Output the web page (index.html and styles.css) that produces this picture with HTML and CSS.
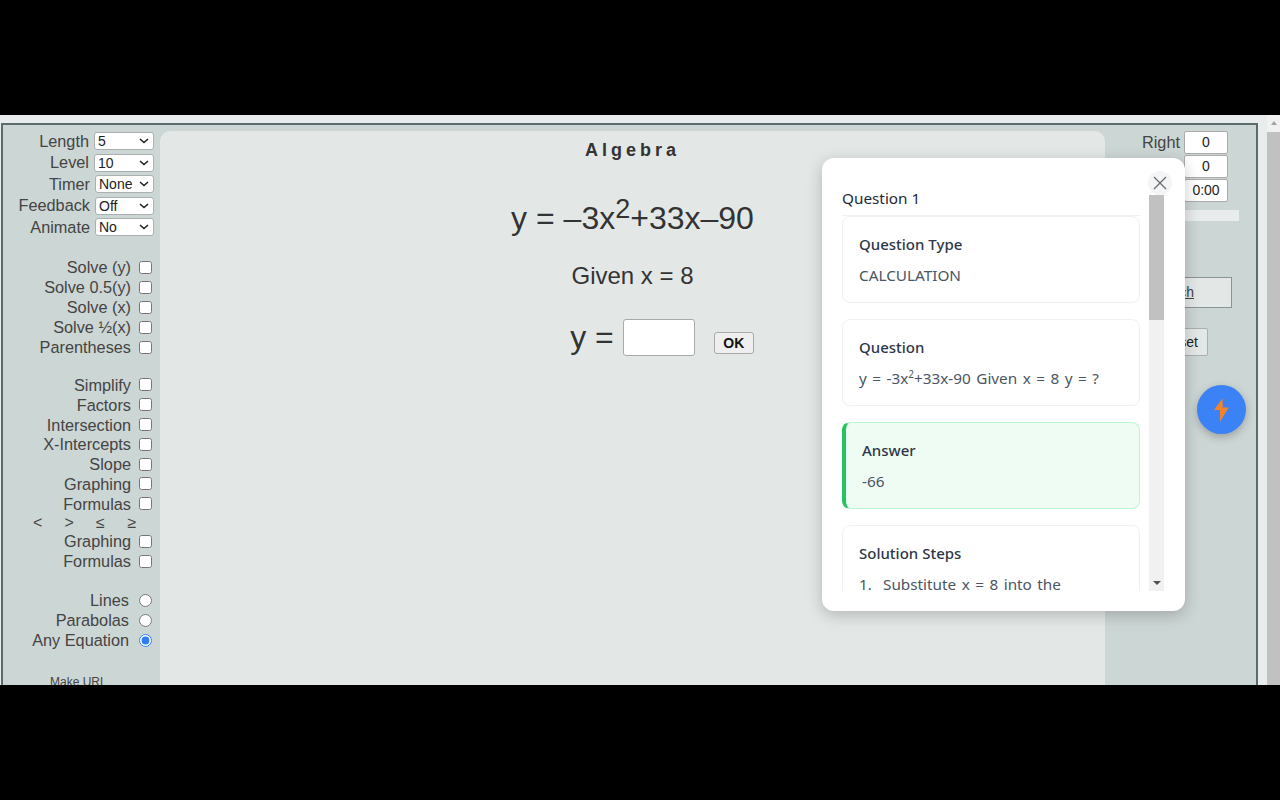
FILE: index.html
```html
<!DOCTYPE html>
<html lang="en">
<head>
    <meta charset="UTF-8">
    <title>Algebra</title>
    <link rel="stylesheet" href="styles.css">
</head>
<body>
    <div class="letterbox"></div>
    <div class="stage">
        <div class="app">
            <div class="sidebar">
                <div class="select-rows">
                    <label class="select-row">Length <select><option>5</option></select></label>
                    <label class="select-row">Level <select><option>10</option></select></label>
                    <label class="select-row">Timer <select class="narrow"><option>None</option></select></label>
                    <label class="select-row">Feedback <select class="narrow"><option>Off</option></select></label>
                    <label class="select-row">Animate <select class="narrow"><option>No</option></select></label>
                </div>
                <div class="check-group first">
                    <label class="check-row">Solve (y) <input type="checkbox"></label>
                    <label class="check-row">Solve 0.5(y) <input type="checkbox"></label>
                    <label class="check-row">Solve (x) <input type="checkbox"></label>
                    <label class="check-row">Solve ½(x) <input type="checkbox"></label>
                    <label class="check-row">Parentheses <input type="checkbox"></label>
                </div>
                <div class="check-group second">
                    <label class="check-row">Simplify <input type="checkbox"></label>
                    <label class="check-row">Factors <input type="checkbox"></label>
                    <label class="check-row">Intersection <input type="checkbox"></label>
                    <label class="check-row">X-Intercepts <input type="checkbox"></label>
                    <label class="check-row">Slope <input type="checkbox"></label>
                    <label class="check-row">Graphing <input type="checkbox"></label>
                    <label class="check-row">Formulas <input type="checkbox"></label>
                    <div class="symbols"><span>&lt;</span><span>&gt;</span><span>≤</span><span>≥</span></div>
                    <label class="check-row">Graphing <input type="checkbox"></label>
                    <label class="check-row">Formulas <input type="checkbox"></label>
                </div>
                <div class="check-group third">
                    <label class="check-row radio-row">Lines <input type="radio" name="kind"></label>
                    <label class="check-row radio-row">Parabolas <input type="radio" name="kind"></label>
                    <label class="check-row radio-row">Any Equation <input type="radio" name="kind" checked></label>
                </div>
                <div class="make-url">Make URL</div>
            </div>

            <div class="main">
                <h1>Algebra</h1>
                <div class="equation">y = –3x<sup>2</sup>+33x–90</div>
                <div class="given">Given x = 8</div>
                <div class="answer-row">
                    <span class="answer-label">y =</span>
                    <input type="text" class="answer-input">
                    <button class="ok-btn">OK</button>
                </div>
            </div>

            <div class="score">
                <div class="score-row"><span>Right</span><div class="score-box">0</div></div>
                <div class="score-row"><span>Wrong</span><div class="score-box">0</div></div>
                <div class="score-row"><span>Time</span><div class="score-box">0:00</div></div>
                <div class="progress"></div>
                <a class="search-btn" href="#">Search</a>
                <button class="reset-btn">Reset</button>
            </div>
        </div>

        <div class="page-scrollbar">
            <div class="page-arrow"></div>
            <div class="page-thumb"></div>
        </div>

        <button class="fab" aria-label="Quick answer">
            <svg width="15" height="24" viewBox="0 0 15 24"><path d="M8.5 0.3 0 12H6V23.7L14.8 9.5H8.7z" fill="#f5822a"/></svg>
        </button>

        <div class="modal">
            <div class="modal-body">
                <h2>Question 1</h2>
                <div class="card">
                    <h3>Question Type</h3>
                    <p>CALCULATION</p>
                </div>
                <div class="card">
                    <h3>Question</h3>
                    <p>y = -3x<sup>2</sup>+33x-90 Given x = 8 y = ?</p>
                </div>
                <div class="card card-answer">
                    <h3>Answer</h3>
                    <p>-66</p>
                </div>
                <div class="card">
                    <h3>Solution Steps</h3>
                    <ol>
                        <li><span class="step-num">1.</span><span>Substitute x = 8 into the equation</span></li>
                    </ol>
                </div>
            </div>
            <div class="modal-scrollbar">
                <div class="modal-thumb"></div>
                <div class="modal-arrow"></div>
            </div>
            <button class="close-btn" aria-label="Close">
                <svg width="14" height="14" viewBox="0 0 14 14"><path d="M1 1 13 13M13 1 1 13" stroke="#6b6b6b" stroke-width="1.3" fill="none"/></svg>
            </button>
        </div>
    </div>
    <div class="letterbox"></div>
</body>
</html>
```

FILE: styles.css
```css
/* Page frame */
body {
    margin: 0;
    font-family: "Liberation Sans", Arial, sans-serif;
    color: #444;
    background: #000;
}

.letterbox {
    height: 115px;
    background: #000;
}

.stage {
    position: relative;
    height: 570px;
    overflow: hidden;
    background: #e8ecec;
    padding: 8px 0 0 1px;
    box-sizing: border-box;
}

.app {
    display: flex;
    width: 1257px;
    height: 640px;
    box-sizing: border-box;
    border: 2px solid #5c6b6b;
    background: #ccd6d4;
}

/* Left column */
.sidebar {
    width: 157px;
    flex-shrink: 0;
    font-size: 16.3px;
}

.select-rows {
    padding-top: 5.5px;
}

.select-row {
    display: flex;
    justify-content: flex-end;
    align-items: center;
    gap: 5px;
    height: 21.5px;
    padding-right: 6px;
}

.select-row select {
    appearance: none;
    width: 60px;
    height: 18px;
    padding: 0 0 0 3px;
    font: 14px "Liberation Sans", Arial, sans-serif;
    color: #222;
    background: #fff url("data:image/svg+xml,%3Csvg xmlns='http://www.w3.org/2000/svg' width='10' height='6'%3E%3Cpath d='M1 1l4 3.5L9 1' fill='none' stroke='%23222' stroke-width='1.6'/%3E%3C/svg%3E") no-repeat right 4px center;
    border: 1px solid #aab0b0;
    border-radius: 3px;
}

.select-row select.narrow {
    width: 59px;
}

.check-group.first {
    margin-top: 19px;
}

.check-group.second {
    margin-top: 18px;
}

.check-group.second .check-row {
    height: 19.8px;
}

.check-group.third {
    margin-top: 19px;
}

.check-row {
    display: flex;
    justify-content: flex-end;
    align-items: center;
    height: 20px;
    padding-right: 8px;
    line-height: 20px;
}

.check-row input {
    width: 13px;
    height: 13px;
    margin: 0 0 0 8px;
    accent-color: #2f7df6;
}

.radio-row input {
    margin-left: 10px;
}

.symbols {
    display: flex;
    gap: 22.5px;
    height: 18px;
    line-height: 18px;
    font-size: 16px;
    padding-left: 30px;
}

.symbols span {
    width: 9px;
}

.make-url {
    margin-top: 24px;
    padding-left: 47px;
    font-size: 12px;
    line-height: 16px;
}

/* Center panel */
.main {
    width: 945px;
    flex-shrink: 0;
    text-align: center;
    background: #e3e8e7;
    border-radius: 10px 10px 0 0;
    color: #333;
    margin-top: 6px;
}

h1 {
    margin: 9px 0 0;
    font-size: 18px;
    line-height: 21px;
    letter-spacing: 4px;
    font-weight: bold;
}

.equation {
    margin-top: 36px;
    font-size: 32px;
    line-height: 42px;
}

.equation sup {
    font-size: 27px;
    line-height: 0;
    vertical-align: 11px;
}

.given {
    margin-top: 22px;
    font-size: 24px;
    line-height: 30px;
}

.answer-row {
    display: flex;
    justify-content: center;
    align-items: center;
    margin-top: 28px;
    padding-left: 59px;
    color: #333;
}

.answer-label {
    font-size: 32px;
    margin-right: 9px;
}

.answer-input {
    width: 72px;
    height: 37px;
    box-sizing: border-box;
    border: 1px solid #aaa;
    border-radius: 3px;
    background: #fff;
    margin-right: 19px;
}

.ok-btn {
    width: 40px;
    height: 22px;
    margin-top: 10px;
    padding: 0;
    font: bold 14px "Liberation Sans", Arial, sans-serif;
    color: #111;
    background: #efefef;
    border: 1px solid #aaa;
    border-radius: 3px;
}

/* Right column */
.score {
    flex: 1;
    font-size: 16.3px;
    padding-top: 5px;
}

.score-row {
    display: flex;
    justify-content: flex-end;
    align-items: center;
    gap: 4px;
    height: 24px;
    padding-right: 28px;
}

.score-box {
    width: 44px;
    height: 23px;
    box-sizing: border-box;
    line-height: 21px;
    text-align: center;
    font-size: 14px;
    color: #222;
    background: #fff;
    border: 1px solid #aaa;
    border-radius: 2px;
}

.progress {
    width: 54px;
    height: 11px;
    margin: 8px 0 0 80px;
    background: #e8ecec;
}

.search-btn {
    display: block;
    width: 111px;
    height: 31px;
    box-sizing: border-box;
    margin: 56px 0 0 16px;
    padding-right: 37px;
    line-height: 29px;
    font-size: 14px;
    text-align: right;
    color: #444;
    background: #e3e8e7;
    border: 1px solid #8a9494;
}

.reset-btn {
    display: block;
    width: 61px;
    height: 28px;
    margin: 20px 0 0 42px;
    padding: 0 9px 0 0;
    font: 14px "Liberation Sans", Arial, sans-serif;
    text-align: right;
    color: #222;
    background: #e3e8e7;
    border: 1px solid #aab0b0;
    border-radius: 2px;
}

.page-scrollbar {
    position: absolute;
    top: 0;
    right: 0;
    width: 13px;
    height: 100%;
    background: #f1f1f1;
}

.page-arrow {
    width: 0;
    margin: 6px auto 0;
    border: 3.5px solid transparent;
    border-top: 0;
    border-bottom: 4px solid #a3a3a3;
}

.page-thumb {
    height: 100%;
    margin-top: 7px;
    background: #c1c1c1;
}

.fab {
    position: absolute;
    left: 1197px;
    top: 270px;
    width: 49px;
    height: 49px;
    padding: 0;
    display: flex;
    align-items: center;
    justify-content: center;
    border: none;
    border-radius: 50%;
    background: #3b82f6;
    box-shadow: 0 3px 8px rgba(0, 0, 0, 0.25);
}

/* Popup */
.modal {
    position: absolute;
    left: 822px;
    top: 43px;
    width: 363px;
    height: 453px;
    display: flex;
    box-sizing: border-box;
    padding: 20px 21px 20px 20px;
    color: #4b5563;
    font-family: "Noto Sans", sans-serif;
    background: #fff;
    border-radius: 12px;
    box-shadow: 0 4px 16px rgba(0, 0, 0, 0.22);
}

.modal-body {
    width: 298px;
    height: 413px;
    overflow: hidden;
    flex-shrink: 0;
}

h2 {
    margin: 8px 0 0;
    padding-bottom: 5px;
    font-size: 15.3px;
    line-height: 24px;
    font-weight: 400;
    color: #1f2937;
    border-bottom: 1px solid #f0f0f0;
}

.card {
    box-sizing: border-box;
    min-height: 87px;
    margin-bottom: 16px;
    padding: 16px 16px 15px;
    border: 1px solid #f0f1f3;
    border-radius: 8px;
    background: #fff;
}

.card h3 {
    margin: 0 0 8px;
    font-size: 15px;
    line-height: 22px;
    font-weight: 500;
    color: #2d3748;
}

.card p {
    margin: 0;
    font-size: 15.3px;
    line-height: 24px;
    word-spacing: 1.5px;
}

.card sup {
    font-size: 10px;
    line-height: 0;
}

.card ol {
    margin: 0;
    padding: 0;
    list-style: none;
    font-size: 15.3px;
    line-height: 24px;
    word-spacing: 1.5px;
}

.card li {
    display: flex;
}

.step-num {
    width: 24px;
    flex-shrink: 0;
}

.card-answer {
    background: #effcf4;
    border-color: #bbf7d0;
    border-left: 4px solid #22c55e;
}

.modal-scrollbar {
    width: 15px;
    height: 396px;
    margin: 17px 0 0 9px;
    background: #f1f1f1;
    display: flex;
    flex-direction: column;
    justify-content: space-between;
}

.modal-thumb {
    height: 125px;
    background: #c1c1c1;
}

.modal-arrow {
    width: 0;
    margin: 0 auto 6px;
    border: 4px solid transparent;
    border-bottom: 0;
    border-top: 4px solid #505050;
}

.close-btn {
    position: absolute;
    top: 13px;
    right: 13px;
    width: 24px;
    height: 24px;
    padding: 0;
    display: flex;
    align-items: center;
    justify-content: center;
    border: none;
    border-radius: 50%;
    background: #f3f4f6;
}
```
